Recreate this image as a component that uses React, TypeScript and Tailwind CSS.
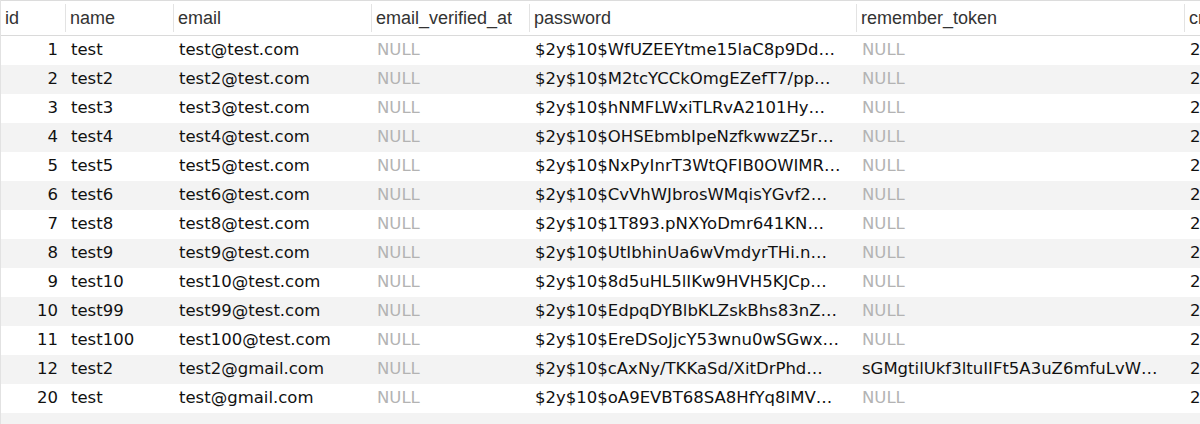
import React from "react";

const cols = [
  { key: "id", w: 64, right: true },
  { key: "name", w: 108 },
  { key: "email", w: 198 },
  { key: "email_verified_at", w: 158 },
  { key: "password", w: 327 },
  { key: "remember_token", w: 328 },
  { key: "created_at", w: 120 },
];

const rows: string[][] = [
  ["1", "test", "test@test.com", "NULL", "$2y$10$WfUZEEYtme15laC8p9Dd…", "NULL"],
  ["2", "test2", "test2@test.com", "NULL", "$2y$10$M2tcYCCkOmgEZefT7/pp…", "NULL"],
  ["3", "test3", "test3@test.com", "NULL", "$2y$10$hNMFLWxiTLRvA2101Hy…", "NULL"],
  ["4", "test4", "test4@test.com", "NULL", "$2y$10$OHSEbmbIpeNzfkwwzZ5r…", "NULL"],
  ["5", "test5", "test5@test.com", "NULL", "$2y$10$NxPyInrT3WtQFIB0OWIMR…", "NULL"],
  ["6", "test6", "test6@test.com", "NULL", "$2y$10$CvVhWJbrosWMqisYGvf2…", "NULL"],
  ["7", "test8", "test8@test.com", "NULL", "$2y$10$1T893.pNXYoDmr641KN…", "NULL"],
  ["8", "test9", "test9@test.com", "NULL", "$2y$10$UtIbhinUa6wVmdyrTHi.n…", "NULL"],
  ["9", "test10", "test10@test.com", "NULL", "$2y$10$8d5uHL5lIKw9HVH5KJCp…", "NULL"],
  ["10", "test99", "test99@test.com", "NULL", "$2y$10$EdpqDYBlbKLZskBhs83nZ…", "NULL"],
  ["11", "test100", "test100@test.com", "NULL", "$2y$10$EreDSoJjcY53wnu0wSGwx…", "NULL"],
  ["12", "test2", "test2@gmail.com", "NULL", "$2y$10$cAxNy/TKKaSd/XitDrPhd…", "sGMgtilUkf3ltuIIFt5A3uZ6mfuLvW…"],
  ["20", "test", "test@gmail.com", "NULL", "$2y$10$oA9EVBT68SA8HfYq8lMV…", "NULL"],
];

const widths = ["w-[64px]", "w-[108px]", "w-[198px]", "w-[158px]", "w-[327px]", "w-[328px]", "w-[120px]"];

export default function App() {
  return (
    <div className="w-[1200px] h-[424px] overflow-hidden bg-white border-l border-[#e2e2e2]">
      <div className="border-t border-[#dcdcdc]">
        {/* header */}
        <div className="flex h-[35px] border-b border-[#dadada] bg-white font-['Liberation_Sans',Arial,sans-serif] text-[18px] text-[#333]">
          {cols.map((c, i) => (
            <div key={c.key} className={`${widths[i]} shrink-0 flex items-center h-full`}>
              {i > 0 && <div className="w-px h-[28px] bg-[#e3e3e3] shrink-0" />}
              <span className="pl-[4px] whitespace-nowrap overflow-hidden">{c.key}</span>
            </div>
          ))}
        </div>
        {/* rows */}
        <div className="font-['DejaVu_Sans','Verdana',sans-serif] text-[16.5px] text-[#111]">
          {[...rows, null].map((r, ri) => (
            <div
              key={ri}
              className={`flex h-[29px] items-center ${ri % 2 === 1 ? "bg-[#f3f3f3]" : "bg-white"}`}
            >
              {r &&
                cols.map((c, i) => {
                  const val = i === 6 ? "2" : r[i];
                  const isNull = val === "NULL";
                  return (
                    <div
                      key={c.key}
                      className={`${widths[i]} shrink-0 whitespace-nowrap overflow-hidden ${
                        i === 0 ? "text-right pr-[7px]" : "pl-[6px]"
                      } ${isNull ? "text-[#b3b3b3]" : ""}`}
                    >
                      {val}
                    </div>
                  );
                })}
            </div>
          ))}
        </div>
      </div>
    </div>
  );
}
